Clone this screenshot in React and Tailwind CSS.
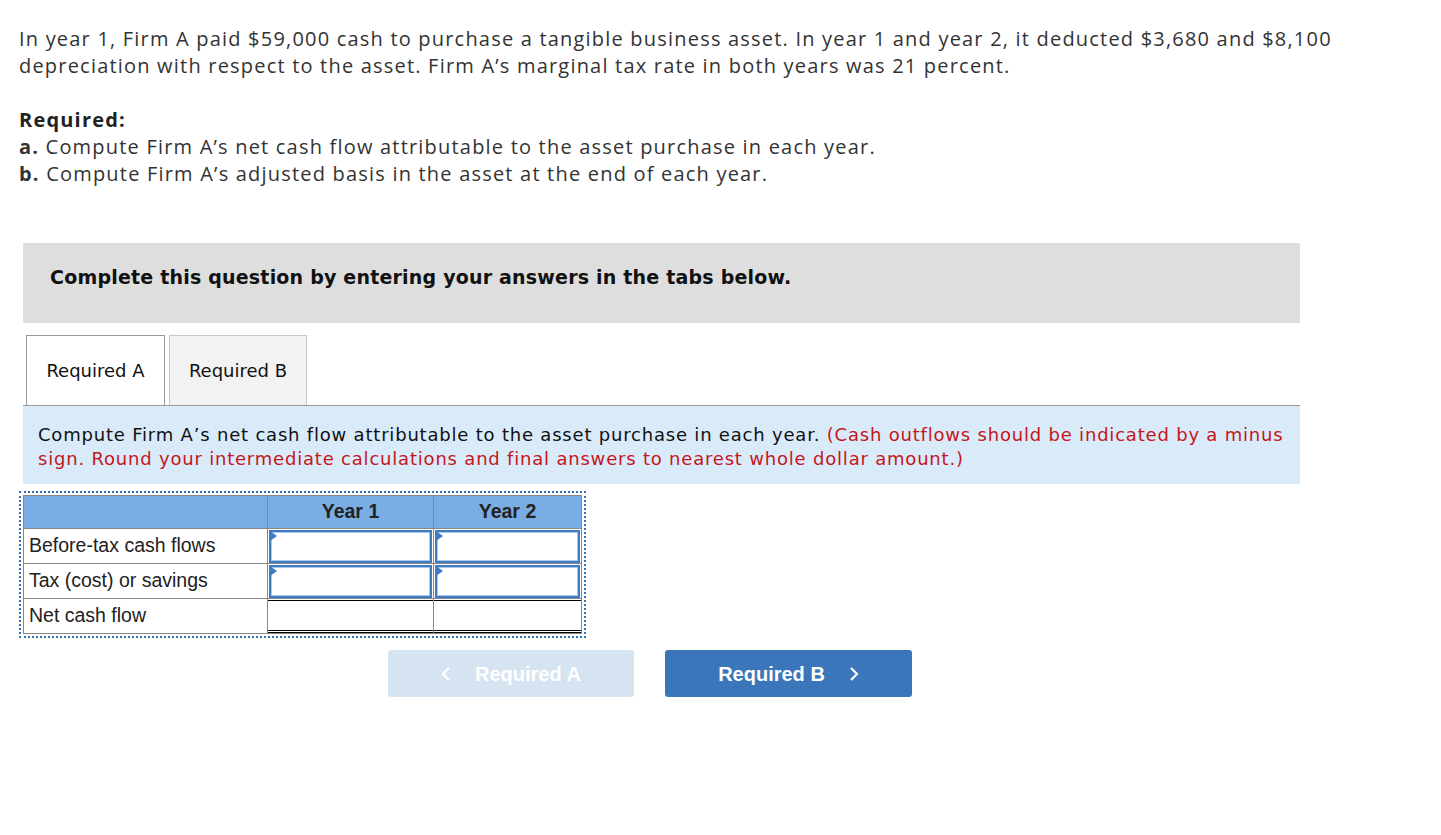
const InputCell = () => (
  <td className="h-[35px] border border-[#888] p-0">
    <div className="relative mx-[1px] h-[33px] border-2 border-[#3f7bc2]">
      <div className="h-full w-full border border-[#a9c7ea] bg-white" />
      <svg className="absolute left-[-1px] top-[-1px]" width="8" height="10" viewBox="0 0 8 10">
        <polygon points="0,0 7,5 0,10" fill="#3f7bc2" />
      </svg>
    </div>
  </td>
);

const rows = ["Before-tax cash flows", "Tax (cost) or savings"];

const App = () => {
  return (
    <div className="min-h-screen bg-white pl-[19px] pt-[25px]">
      {/* question text */}
      <div className="whitespace-nowrap font-['Open_Sans',sans-serif] text-[20px] leading-[27px] tracking-[1.2px] text-[#333]">
        <p>
          In year 1, Firm A paid $59,000 cash to purchase a tangible business asset. In year 1 and year 2, it deducted $3,680 and $8,100
          <br />
          depreciation with respect to the asset. Firm A’s marginal tax rate in both years was 21 percent.
        </p>
        <p className="mt-[27px] font-bold text-[#222]">Required:</p>
        <p>
          <span className="font-bold">a.</span> Compute Firm A’s net cash flow attributable to the asset purchase in each year.
        </p>
        <p>
          <span className="font-bold">b.</span> Compute Firm A’s adjusted basis in the asset at the end of each year.
        </p>
      </div>

      {/* instructions bar */}
      <div className="ml-[4px] mt-[56px] h-[80px] w-[1277px] bg-[#dedede] pl-[27px] pt-[23px]">
        <p className="font-['DejaVu_Sans',Verdana,sans-serif] text-[19px] font-bold leading-[22px] tracking-[0.2px] text-[#111]">
          Complete this question by entering your answers in the tabs below.
        </p>
      </div>

      {/* tabs */}
      <div className="ml-[4px] mt-[12px] w-[1277px]">
        <div className="flex gap-[4px] border-b border-[#999] pl-[3px] font-['DejaVu_Sans',Verdana,sans-serif] text-[18px] text-[#111]">
          <div className="flex h-[70px] w-[139px] items-center justify-center border border-b-0 border-[#999] bg-white">
            Required A
          </div>
          <div className="flex h-[70px] w-[138px] items-center justify-center border border-b-0 border-[#c8c8c8] bg-[#f2f2f2]">
            Required B
          </div>
        </div>
        <div className="h-[78px] whitespace-nowrap bg-[#d9ebf9] pl-[15px] pt-[17px] font-['DejaVu_Sans',Verdana,sans-serif] text-[18px] leading-[24px] tracking-[0.8px] text-[#111]">
          Compute Firm A’s net cash flow attributable to the asset purchase in each year.{" "}
          <span className="text-[#c4161c]">
            (Cash outflows should be indicated by a minus
            <br />
            sign. Round your intermediate calculations and final answers to nearest whole dollar amount.)
          </span>
        </div>
      </div>

      {/* answer table */}
      <div className="mt-[7px] w-[567px] border-2 border-dotted border-[#3570bb] p-[2px]">
        <table className="w-full border-collapse font-['Liberation_Sans',Arial,sans-serif] text-[19.5px] text-[#222]">
          <thead>
            <tr className="h-[33px] bg-[#79ade3]">
              <th className="w-[244px] border border-[#888]" />
              <th className="w-[166px] border border-[#888] font-bold">Year 1</th>
              <th className="border border-[#888] font-bold">Year 2</th>
            </tr>
          </thead>
          <tbody>
            {rows.map((label) => (
              <tr key={label}>
                <td className="h-[35px] border border-[#888] pl-[5px]">{label}</td>
                <InputCell />
                <InputCell />
              </tr>
            ))}
            <tr>
              <td className="h-[35px] border border-[#888] pl-[5px]">Net cash flow</td>
              <td className="h-[35px] border border-[#888] p-0">
                <div className="h-[33px] border-b-[3px] border-t border-double border-t-black border-b-black" />
              </td>
              <td className="h-[35px] border border-[#888] p-0">
                <div className="h-[33px] border-b-[3px] border-t border-double border-t-black border-b-black" />
              </td>
            </tr>
          </tbody>
        </table>
      </div>

      {/* navigation */}
      <div className="ml-[-19px] mt-[12px] flex w-[1300px] justify-center gap-[31px] font-['Liberation_Sans',Arial,sans-serif] text-[20px] font-bold text-white">
        <button className="flex h-[47px] w-[246px] items-center justify-center gap-[24px] rounded-[3px] bg-[#d6e3f1]">
          <svg width="10" height="14" viewBox="0 0 10 14">
            <polyline points="8,1 2,7 8,13" fill="none" stroke="white" strokeWidth="2.2" />
          </svg>
          <span>Required A</span>
        </button>
        <button className="flex h-[47px] w-[247px] items-center justify-center gap-[24px] rounded-[3px] bg-[#3a76b9]">
          <span>Required B</span>
          <svg width="10" height="14" viewBox="0 0 10 14">
            <polyline points="2,1 8,7 2,13" fill="none" stroke="white" strokeWidth="2.2" />
          </svg>
        </button>
      </div>
    </div>
  );
};

export default App;
